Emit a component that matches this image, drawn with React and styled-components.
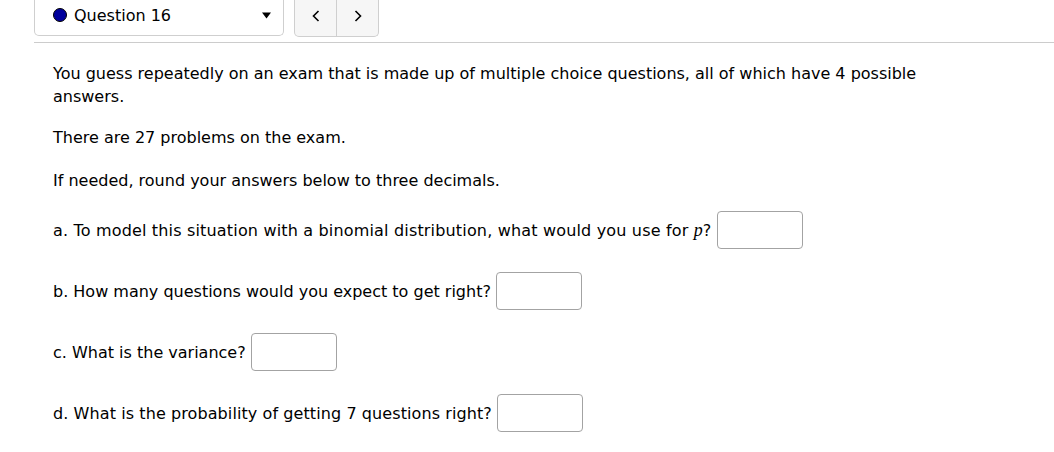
import React from "react";
import styled, { createGlobalStyle } from "styled-components";

const Global = createGlobalStyle`
  html, body { margin: 0; padding: 0; background: #fff; }
  body { font-family: "DejaVu Sans", Verdana, sans-serif; color: #000; }
`;

const Page = styled.div`
  width: 1054px;
  height: 452px;
  overflow: hidden;
  background: #fff;
`;

const Header = styled.div`
  margin-left: 34px;
`;

const Toolbar = styled.div`
  display: flex;
  gap: 10px;
  height: 36px;
`;

const Select = styled.div`
  box-sizing: border-box;
  width: 250px;
  height: 36px;
  border: 1px solid #cfcfcf;
  border-top: none;
  border-radius: 0 0 5px 5px;
  display: flex;
  align-items: center;
  padding: 0 12px 5px 18px;
  font-size: 16px;
`;

const Dot = styled.span`
  width: 12px;
  height: 12px;
  border-radius: 50%;
  background: #00009c;
  border: 1px solid #000;
  margin-right: 7px;
  flex: none;
`;

const SelectLabel = styled.span`
  flex: 1;
`;

const Nav = styled.div`
  box-sizing: border-box;
  display: flex;
  width: 85px;
  height: 37px;
  border: 1px solid #cfcfcf;
  border-top: none;
  border-radius: 0 0 5px 5px;
  background: #f6f6f6;
  overflow: hidden;
`;

const NavButton = styled.div`
  flex: 1;
  display: flex;
  align-items: center;
  justify-content: center;
  padding-bottom: 5px;
  & + & { border-left: 1px solid #cfcfcf; }
`;

const Rule = styled.div`
  height: 1px;
  margin-top: 6px;
  background: #cccccc;
`;

const Content = styled.div`
  padding: 19px 0 0 53px;
  width: 900px;
  font-size: 16px;
  line-height: 23px;
`;

const Para = styled.p`
  margin: 0 0 ${(p) => p.$mb}px 0;
`;

const Row = styled.div`
  display: flex;
  align-items: center;
  gap: 5px;
  height: 38px;
  margin-bottom: 23px;
`;

const Prompt = styled.span`
  letter-spacing: ${(p) => p.$track || 0}px;
`;

const Var = styled.i`
  font-family: "Liberation Serif", "DejaVu Serif", serif;
  font-size: 18px;
`;

const Input = styled.div`
  box-sizing: border-box;
  width: 86px;
  height: 38px;
  border: 1px solid #a3a3a3;
  border-radius: 4px;
  background: #fff;
`;

const Chevron = ({ dir }) => (
  <svg width="10" height="12" viewBox="0 0 10 12">
    <polyline
      points={dir === "left" ? "7.5,1 2.5,6 7.5,11" : "2.5,1 7.5,6 2.5,11"}
      fill="none"
      stroke="#000"
      strokeWidth="1.6"
    />
  </svg>
);

const Caret = () => (
  <svg width="9" height="7" viewBox="0 0 9 7">
    <polygon points="0,0.5 9,0.5 4.5,6.5" fill="#000" />
  </svg>
);

export default function App() {
  return (
    <Page>
      <Global />
      <Header>
        <Toolbar>
          <Select>
            <Dot />
            <SelectLabel>Question 16</SelectLabel>
            <Caret />
          </Select>
          <Nav>
            <NavButton><Chevron dir="left" /></NavButton>
            <NavButton><Chevron dir="right" /></NavButton>
          </Nav>
        </Toolbar>
        <Rule />
      </Header>
      <Content>
        <Para $mb={18}>
          You guess repeatedly on an exam that is made up of multiple choice questions, all of which have 4 possible answers.
        </Para>
        <Para $mb={20}>There are 27 problems on the exam.</Para>
        <Para $mb={19}>If needed, round your answers below to three decimals.</Para>
        <Row>
          <Prompt $track={0.17}>
            a. To model this situation with a binomial distribution, what would you use for <Var>p</Var>?
          </Prompt>
          <Input />
        </Row>
        <Row>
          <Prompt>b. How many questions would you expect to get right?</Prompt>
          <Input />
        </Row>
        <Row>
          <Prompt>c. What is the variance?</Prompt>
          <Input />
        </Row>
        <Row>
          <Prompt $track={0.09}>d. What is the probability of getting 7 questions right?</Prompt>
          <Input />
        </Row>
      </Content>
    </Page>
  );
}
